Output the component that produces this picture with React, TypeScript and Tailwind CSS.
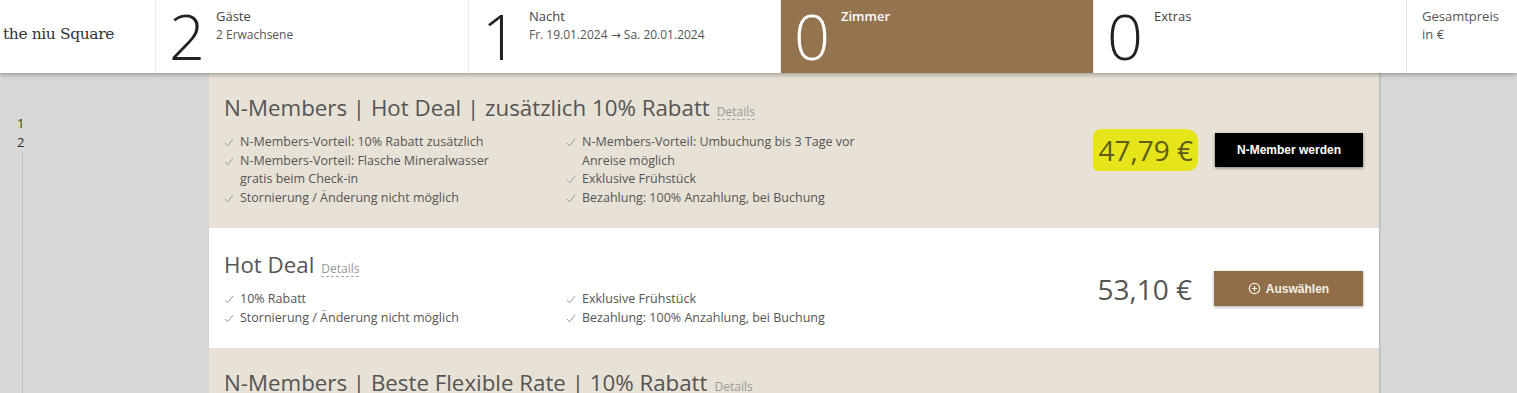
import React from 'react';

type Rate = {
  title: string;
  tone: 'beige' | 'white';
  left: string[];
  right: string[];
  price?: string;
  highlight?: boolean;
  action?: 'member' | 'select';
};

const rates: Rate[] = [
  {
    title: 'N-Members | Hot Deal | zusätzlich 10% Rabatt',
    tone: 'beige',
    left: [
      'N-Members-Vorteil: 10% Rabatt zusätzlich',
      'N-Members-Vorteil: Flasche Mineralwasser gratis beim Check-in',
      'Stornierung / Änderung nicht möglich',
    ],
    right: [
      'N-Members-Vorteil: Umbuchung bis 3 Tage vor Anreise möglich',
      'Exklusive Frühstück',
      'Bezahlung: 100% Anzahlung, bei Buchung',
    ],
    price: '47,79 €',
    highlight: true,
    action: 'member',
  },
  {
    title: 'Hot Deal',
    tone: 'white',
    left: ['10% Rabatt', 'Stornierung / Änderung nicht möglich'],
    right: ['Exklusive Frühstück', 'Bezahlung: 100% Anzahlung, bei Buchung'],
    price: '53,10 €',
    action: 'select',
  },
  {
    title: 'N-Members | Beste Flexible Rate | 10% Rabatt',
    tone: 'beige',
    left: ['N-Members-Vorteil: 10% Rabatt zusätzlich', 'Kostenfreie Stornierung'],
    right: ['Exklusive Frühstück', 'Bezahlung: bei Anreise'],
  },
];

// ── Header ────────────────────────────────────────────────────────────────────
function Stat({ n, label, sub, active, width }: {
  n: string; label: string; sub?: React.ReactNode; active?: boolean; width: string;
}) {
  return (
    <div className={`flex h-full shrink-0 border-l border-[#e8e8e8] ${width} ${active ? 'bg-[#94744e] border-[#94744e]' : 'bg-white'}`}>
      <div className={`w-[60px] shrink-0 pl-[13px] pt-[3px] text-[63px] font-light leading-[66px] ${active ? 'text-white' : 'text-[#222]'}`}>
        {n}
      </div>
      <div className="pt-[7px]">
        <div className={`text-[13px] leading-[19px] ${active ? 'font-semibold text-white' : 'text-[#444]'}`}>{label}</div>
        {sub && <div className="text-[12px] leading-[17px] text-[#555]">{sub}</div>}
      </div>
    </div>
  );
}

function Header() {
  return (
    <div className="relative z-10 flex h-[73px] bg-white shadow-[0_2px_4px_rgba(0,0,0,0.28)]">
      <div className="flex w-[155px] shrink-0 items-center pl-[3px] pb-[3px] font-['DejaVu_Serif',serif] text-[15.5px] tracking-[-0.4px] text-[#333]">
        the niu Square
      </div>
      <Stat n="2" label="Gäste" sub="2 Erwachsene" width="w-[313px]" />
      <Stat
        n="1"
        label="Nacht"
        sub={<>Fr. 19.01.2024 <span className="font-['DejaVu_Sans',sans-serif] text-[12px]">→</span> Sa. 20.01.2024</>}
        width="w-[312px]"
      />
      <Stat n="0" label="Zimmer" active width="w-[313px]" />
      <Stat n="0" label="Extras" width="w-[313px]" />
      <div className="flex-1 border-l border-[#e8e8e8] pl-[15px] pt-[7px] text-[13px] leading-[18px] text-[#555]">
        <div>Gesamtpreis</div>
        <div>in €</div>
      </div>
    </div>
  );
}

// ── Rate card ─────────────────────────────────────────────────────────────────
function Check() {
  return (
    <svg width="10" height="9" viewBox="0 0 10 9" className="mt-[5px] shrink-0">
      <polyline points="1,5 3.6,7.8 9,1" fill="none" stroke="#9a9a9a" strokeWidth="1" />
    </svg>
  );
}

function FeatureList({ items }: { items: string[] }) {
  return (
    <ul className="w-[342px] shrink-0">
      {items.map((t) => (
        <li key={t} className="flex w-[296px] gap-[6px] text-[12.5px] leading-[18.7px] text-[#555]">
          <Check />
          <span>{t}</span>
        </li>
      ))}
    </ul>
  );
}

function PlusCircle() {
  return (
    <svg width="13" height="13" viewBox="0 0 14 14" className="shrink-0">
      <circle cx="7" cy="7" r="5.6" fill="none" stroke="currentColor" strokeWidth="1.3" />
      <path d="M7 4.2v5.6M4.2 7h5.6" stroke="currentColor" strokeWidth="1.3" />
    </svg>
  );
}

function RateCard({ rate }: { rate: Rate }) {
  const beige = rate.tone === 'beige';
  return (
    <div className={`flex items-center pl-[15px] pr-[16px] ${beige ? 'bg-[#e8e1d5] pt-[20px] pb-[20px]' : 'bg-white pt-[22px] pb-[21px]'}`}>
      <div className="flex-1">
        <div className="flex items-baseline gap-[7px] leading-[30px]">
          <h2 className="text-[22.3px] text-[#555]">{rate.title}</h2>
          <span className="border-b border-dashed border-[#aaa] text-[12px] leading-[15px] text-[#999]">Details</span>
        </div>
        <div className="mt-[10px] flex">
          <FeatureList items={rate.left} />
          <FeatureList items={rate.right} />
        </div>
      </div>
      {rate.price && (
        <div className="flex items-center gap-[17px]">
          {rate.highlight ? (
            <span className="rounded-[8px_12px_10px_5px] bg-[#e6e51a] px-[5px] py-[5px] text-[28px] leading-[32px] text-[#5e5c1a]">
              {rate.price}
            </span>
          ) : (
            <span className="px-[5px] text-[28px] leading-[32px] text-[#555]">{rate.price}</span>
          )}
          {rate.action === 'member' ? (
            <button className="flex h-[34px] w-[148px] items-center justify-center bg-black font-['Liberation_Sans',sans-serif] text-[12px] font-bold text-white shadow-[0_1px_3px_rgba(0,0,0,0.45)]">
              N-Member werden
            </button>
          ) : (
            <button className="flex h-[35px] w-[149px] items-center justify-center gap-[5px] bg-[#8f6e49] font-['Liberation_Sans',sans-serif] text-[12px] font-bold text-[#f6f0e6] shadow-[0_1px_3px_rgba(0,0,0,0.35)]">
              <PlusCircle />
              Auswählen
            </button>
          )}
        </div>
      )}
    </div>
  );
}

export default function App() {
  return (
    <div className="h-[393px] w-[1517px] overflow-hidden bg-[#d8d8d8] font-['Open_Sans',sans-serif]">
      <Header />
      <div className="flex">
        <div className="flex w-[209px] shrink-0 flex-col pl-[17px] pt-[41px]">
          <div className="text-[13px] leading-[19px] text-[#333]">1</div>
          <div className="text-[13px] leading-[19px] text-[#333]">2</div>
          <div className="ml-[5px] h-[300px] w-px bg-[#c2c2c2]" />
        </div>
        <div className="w-[1170px] shrink-0 shadow-[1px_0_2px_rgba(0,0,0,0.2)]">
          {rates.map((r) => (
            <RateCard key={r.title} rate={r} />
          ))}
        </div>
      </div>
    </div>
  );
}
